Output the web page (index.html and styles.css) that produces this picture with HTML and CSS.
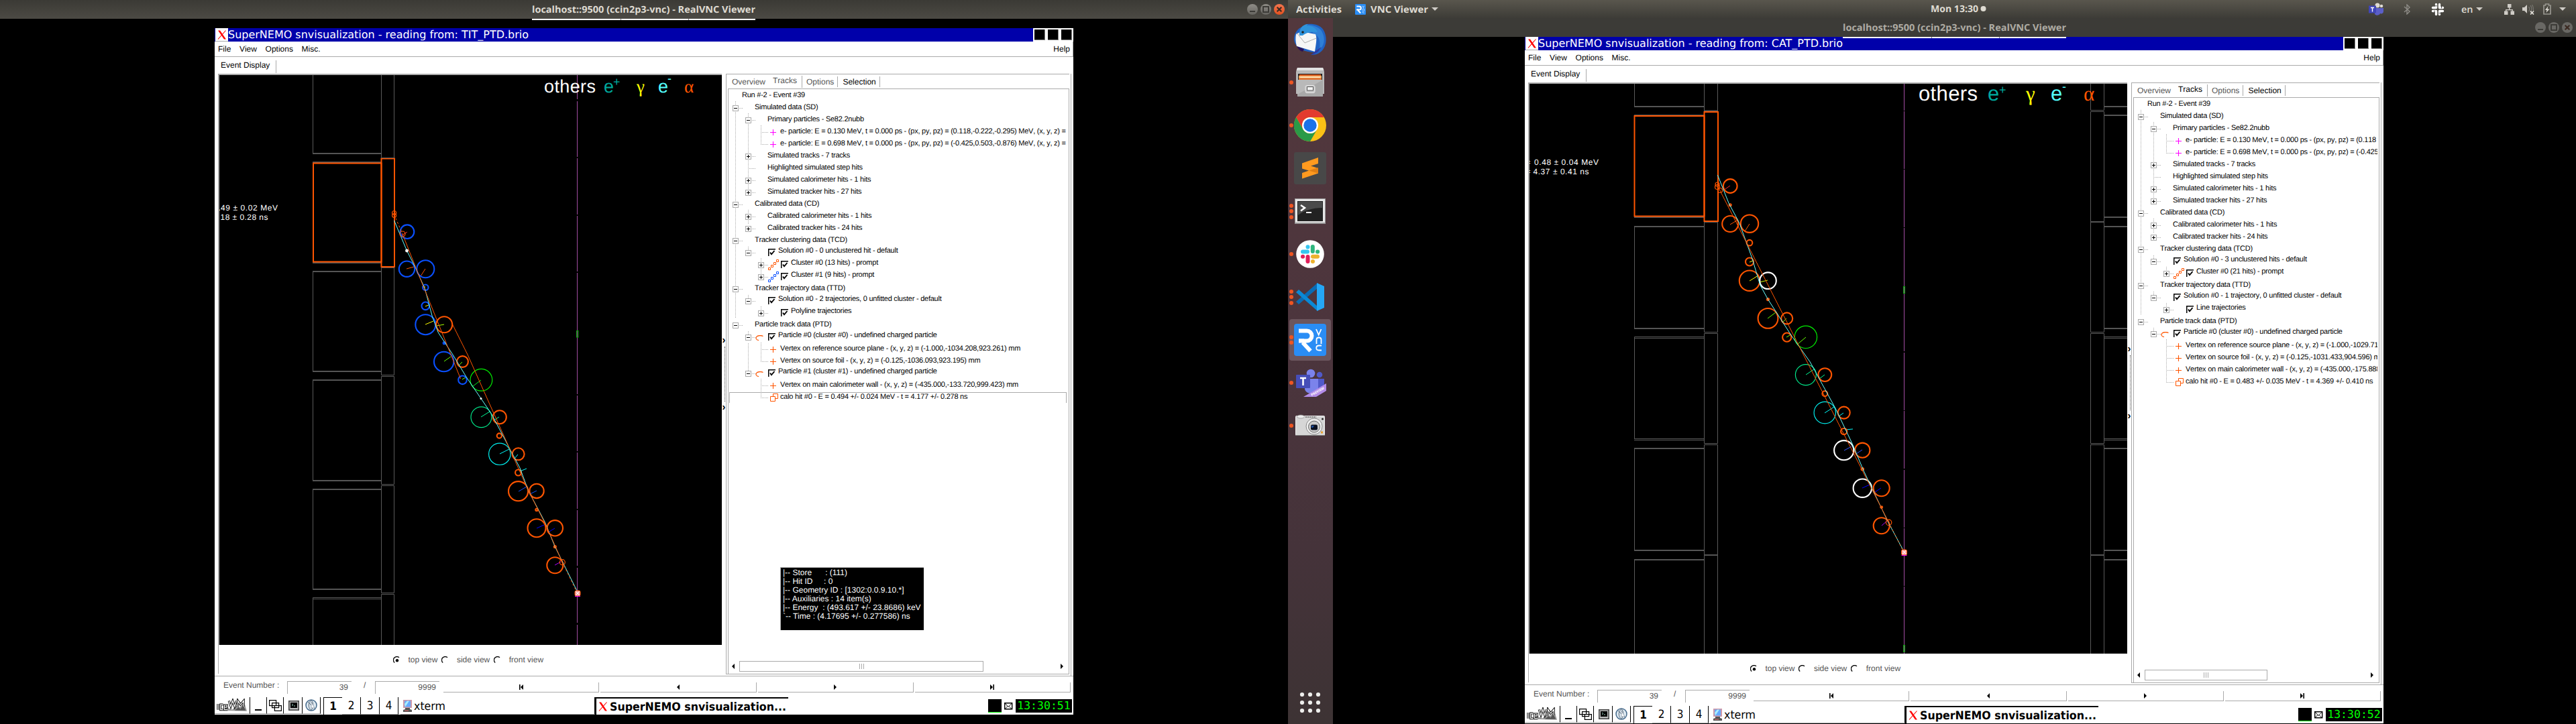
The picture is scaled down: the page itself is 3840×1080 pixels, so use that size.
FILE: index.html
```html
<!DOCTYPE html>
<html lang="en">
<head>
<meta charset="utf-8">
<title>SuperNEMO snvisualization</title>
<link rel="stylesheet" href="styles.css">
</head>
<body>
<svg class="defs" width="0" height="0">
  <defs>
    <symbol id="i-check" viewBox="0 0 11 11"><path d="M0 .75H11M.75 0V11" stroke="#000" stroke-width="1.5"/><path d="M3 5.5l2 2.8L9.5 3" fill="none" stroke="#000" stroke-width="1.9"/></symbol>
    <symbol id="i-plus" viewBox="0 0 9 9"><path d="M0 4.5H9M4.5 0V9" stroke="currentColor" stroke-width="1.1"/></symbol>
    <symbol id="i-cluster" viewBox="0 0 16 16"><path d="M.5 12.5h3v3h-3zM4.5 8.5h3v3h-3zM8.5 4.5h3v3h-3zM12.5.5h3v3h-3z" fill="none" stroke="currentColor"/></symbol>
    <symbol id="i-arc" viewBox="0 0 12 9"><path d="M11.5 1.5C9 .2 4 0 2 2.2.3 4 .6 7 5 7.7" fill="none" stroke="currentColor" stroke-width="1.2"/></symbol>
    <symbol id="i-calo" viewBox="0 0 12 12"><path d="M4.5 4V.5h7v7H8M.5 4.5h7v7h-7z" fill="none" stroke="currentColor"/></symbol>
    <symbol id="i-x" viewBox="0 0 14 14"><path d="M1 .5h3l9 13h-3z" fill="#f00"/><path d="M12.5.5L1 13.5" stroke="#f00" stroke-width="1.1"/></symbol>
    <symbol id="i-play" viewBox="0 0 4 8"><path d="M0 0l4 4-4 4z"/></symbol>
    <symbol id="i-back" viewBox="0 0 4 8"><path d="M4 0L0 4l4 4z"/></symbol>
    <symbol id="i-first" viewBox="0 0 6 8"><path d="M0 0h1.6v8H0zM6 0v8L2 4z"/></symbol>
    <symbol id="i-last" viewBox="0 0 6 8"><path d="M4.4 0H6v8H4.4zM0 0v8l4-4z"/></symbol>
    <symbol id="i-radio" viewBox="0 0 11 11"><path d="M2.2 9.6A4.8 4.8 0 0 1 9 1.8" fill="none" stroke="#000" stroke-width="1.3"/></symbol>
    <symbol id="i-radio-on" viewBox="0 0 11 11"><path d="M2.2 9.6A4.8 4.8 0 0 1 9 1.8" fill="none" stroke="#000" stroke-width="1.3"/><circle cx="6" cy="6.2" r="2.2"/></symbol>
    <symbol id="i-icewm" viewBox="0 0 48 20"><path d="M3 18l14-4 7 3 6-6 6 2 7-7 4 13z" fill="#999"/><path d="M28 18l6-5 3 3 4-6 4 8z" fill="#555"/><path d="M2 8v9M10 9H6v8h4M12 13h4v-3h-4v7h5M19 3l3 9 3-9 3 9 3-9M33 13V3l4 6 5-6v9" fill="none" stroke="#000" stroke-width="3.2"/><path d="M2 8v9M10 9H6v8h4M12 13h4v-3h-4v7h5M19 3l3 9 3-9 3 9 3-9M33 13V3l4 6 5-6v9" fill="none" stroke="#fff" stroke-width="1.3"/></symbol>
    <symbol id="i-windows" viewBox="0 0 19 17"><g fill="#fff" stroke="#000" stroke-width="1.2"><path d="M.6.6h10v8H.6zM4.6 4.6h10v7h-10zM8.400 8.600h10v7.700h-10z"/></g></symbol>
    <symbol id="i-term" viewBox="0 0 16 15"><path fill="#444" d="M0 0h16v15H0z"/><path fill="#bbb" d="M1.500 1.500h13v12h-13z"/><path d="M3 3h10v8H3z"/><path d="M5 5l2 1.500L5 8m3 0h2" stroke="#9cb" fill="none"/></symbol>
    <symbol id="i-globe" viewBox="0 0 18 18"><circle cx="9" cy="9" r="8" fill="#dde8f0" stroke="#456a8c" stroke-width="1.5"/><path d="M9 1.500c-5 3-5 12 0 15 3-4 4-11 0-15M4 4l10 10" fill="none" stroke="#567"/><path d="M9 4v9h5z" fill="#fff" stroke="#789" stroke-width=".7"/></symbol>
    <symbol id="i-pc" viewBox="0 0 15 18"><path fill="#c9a" d="M1 0h13v12H1z"/><path fill="#6af" d="M3 1.500h9v9H3z"/><path fill="#aef" d="M3 6l4-4.500h3L4 10.500z"/><path fill="#555" d="M4 12h7v2l3 1v3H1v-3l3-1z"/><path fill="#c66" d="M3 15.500h6v1.200H3z"/></symbol>
    <symbol id="i-mail" viewBox="0 0 13 11"><path d="M.7.7h11v9H.7z" fill="#fff" stroke="#000" stroke-width="1.4"/><path d="M1 1l5 5.500L11.500 1M1 9.500l4-4M11 9.500l-4-4" fill="none" stroke="#000"/></symbol>
    <symbol id="i-vnc" viewBox="0 0 48 48"><rect width="48" height="48" rx="4" fill="#2a8df5"/><path d="M7 10.500h12a7.500 7.500 0 0 1 0 15H7M13 28l11.500 12.500" fill="none" stroke="#fff" stroke-width="6"/><path d="M7 22.500h8v5.500H7z" fill="#fff"/><path d="M33 8l3.700 8.500L40.500 8M33.500 30v-6.500c0-4 7-4 7 0V30M41 39.500h-4c-5 0-5-7 0-7h4" fill="none" stroke="#fff" stroke-width="1.800"/></symbol>
    <symbol id="i-close" viewBox="0 0 16 16"><path d="M4.700 4.700l6.600 6.600M11.300 4.700l-6.600 6.600" stroke="#3c2a22" stroke-width="2.200"/></symbol>
  </defs>
</svg>

<main class="desktop">
<!-- first monitor -->
<section class="screen">
  <header class="wm-bar active">
    <svg class="wm-title" width="333" height="28"><text x="0" y="19" textLength="333" lengthAdjust="spacingAndGlyphs">localhost::9500 (ccin2p3-vnc) - RealVNC Viewer</text></svg>
    <div class="wm-buttons"><i class="min"></i><i class="max"></i><i class="close"><svg width="16" height="16"><use href="#i-close"/></svg></i></div>
    <div class="vnc-tab"><i></i><i></i></div>
  </header>

  <article class="app app-left">
    <header class="app-title">
      <span class="app-icon"><svg width="14" height="14"><use href="#i-x"/></svg></span>
      <svg class="app-name" width="448" height="20"><text x="0" y="15" textLength="448" lengthAdjust="spacingAndGlyphs">SuperNEMO snvisualization - reading from: TIT_PTD.brio</text></svg>
      <span class="app-btns"><i></i><i></i><i></i></span>
    </header>
    <nav class="menu"><span>File</span><span>View</span><span>Options</span><span>Misc.</span><span class="help">Help</span></nav>
    <div class="display-tab"><span>Event Display</span></div>
    <div class="work">
      <div class="view">
        <svg class="canvas" width="749" height="850" viewBox="327 112 749 850">
          <g class="wall">
            <path d="M466.500 112V229M568.500 112V235.500H587.500V112"/><path class="w2" d="M466 229H568"/>
            <path class="w2" d="M466 242H568M466 392H568"/>
            <path d="M466.500 405V554.500H568.500M568.500 399V559.500H587.500V399"/><path class="w2" d="M466 405H568M466 554H568"/>
            <path d="M466.500 567V717M568.500 561.500V722.500H587.500V561.500z"/><path class="w2" d="M466 567H568M466 717H568"/>
            <path d="M466.500 730V879M568.500 724.500V884.500H587.500V724.500z"/><path class="w2" d="M466 730H568M466 879H568"/>
            <path d="M466.500 962V891.500H568M466.500 893.500H568M568.500 962V886.500H587.500V962"/>
          </g>
          <path class="foil" d="M860.500 112V148M860.500 151V234M860.500 236V320M860.500 322V405M860.500 407V588M860.500 590V673M860.500 675V759M860.500 761V844M860.500 847V929M860.500 932V962"/>
          <rect class="tag" x="859.500" y="493.500" width="2.500" height="9.500"/>
          <g class="hitbox"><rect x="467" y="243.500" width="101.500" height="147"/><rect x="568.500" y="236.500" width="19.500" height="161.500"/></g>
          <path class="gline" d="M568 235.500H588M568 399.500H588"/>
          <g class="rays">
            <path stroke="#f33" d="M607 346l-8 5"/><path stroke="#f50" d="M606 401l11-3M634 401l-7 11"/>
            <path stroke="#ff0" d="M634 484l12-5M634 457l5-2M634 428l-3 0"/><path stroke="#af0" d="M662 484l-11 2"/><path stroke="#6f0" d="M662 539l10-7M689 540l-6 6M689 566l5-3"/>
            <path stroke="#0e2" d="M717 567l-12 9"/><path stroke="#0f9" d="M717 622l13-8M744 622l-8 5"/><path stroke="#0ff" d="M745 677l14-7M772 678l-5 6M775 703l10-4"/>
            <path stroke="#15f" d="M773 733l12-7M800 732l-10 5"/><path stroke="#00f" d="M800 788l11-5M827 788l-10 6"/><path stroke="#a0f" d="M827 843l9-5"/>
          </g>
          <g class="blue"><circle cx="607" cy="345.700" r="10.300"/><circle cx="606.500" cy="401.200" r="11.700"/><circle cx="634.300" cy="401.200" r="13"/><circle cx="634.300" cy="428.700" r="4.200"/><circle cx="634.300" cy="456.300" r="5.800"/><circle cx="634.300" cy="484.200" r="15"/><circle cx="662.200" cy="511.700" r="1.500"/><circle cx="661.700" cy="539.500" r="14.700"/><circle cx="689.500" cy="566.800" r="6.300"/></g>
          <g class="orange"><circle cx="662.200" cy="484.200" r="12"/><circle cx="689.500" cy="539.500" r="8.400"/><circle cx="744.800" cy="622.200" r="10"/><circle cx="744.300" cy="650" r="3.600"/><circle cx="772.600" cy="677.300" r="9"/><circle cx="772.600" cy="705" r="4.500"/><circle cx="772.600" cy="732.700" r="14.600"/><circle cx="800" cy="732.400" r="10.700"/><circle cx="800" cy="760.400" r="1.700"/><circle cx="800" cy="787.800" r="13.500"/><circle cx="827.300" cy="787.800" r="11.700"/><circle cx="827.300" cy="815.500" r="1.500"/><circle cx="827.300" cy="843.200" r="12"/></g>
          <circle class="thin" stroke="#0e0" cx="717.400" cy="566.800" r="16.400"/><circle class="thin" stroke="#00e88a" cx="717.400" cy="622.200" r="15.400"/><circle class="thin" stroke="#0ee" cx="744.800" cy="677.300" r="16.200"/>
          <path class="cyan" d="M587.600 329L606.500 374 619.400 399.500 633.300 430.400 644.300 471.800 653.200 495.900 675.600 530 695.500 563 717 594.500 732.800 617.700 760.200 670 775 698 787.500 731.700 812.400 779 827.300 815.500 860.700 882.500"/>
          <path class="traj" d="M600 349L620.500 401 654 484 686.600 565M674.600 484L697.500 530 720.900 582.600 744.300 635 760.200 670.300 787.500 731.700 813.400 782.500 838.300 838.700"/>
          <path class="traj dash" d="M587.600 320L600 349M838.300 838.700L860.700 885"/>
          <circle class="thin" stroke="#f50" cx="600" cy="349" r="4"/><circle class="thin" stroke="#f50" cx="838.300" cy="838.700" r="4"/>
          <circle class="thin" stroke="#f50" cx="587.600" cy="317.500" r="3"/><circle class="thin" stroke="#f50" cx="587.600" cy="321.500" r="3"/>
          <circle cx="606.500" cy="374" r="2.400" fill="#fff"/><circle cx="717" cy="594.500" r="1.500" fill="#fff"/>
          <rect x="857" y="881" width="8" height="8" rx="2" fill="#faa" stroke="#f50"/><path d="M858 882l6 6M864 882l-6 6" stroke="#fff"/><path d="M857 889.500h8" stroke="#f0f"/>
          <g class="legend"><text x="811" y="137.500" textLength="77">others</text><text x="900" y="137.500" fill="#00a99d">e</text><text x="914" y="128" class="sup" fill="#00a99d">+</text><text x="949" y="137.500" fill="#ff0" class="greek">γ</text><text x="981" y="137.500" fill="#5ff">e</text><text x="995" y="123" class="sup" fill="#5ff">-</text><text x="1020" y="137.500" fill="#f50" class="greek">α</text></g>
          <g class="note"><text x="325.500" y="314">.</text><text x="329" y="314" textLength="85">49 ± 0.02 MeV</text><text x="328.500" y="328" textLength="71">18 ± 0.28 ns</text></g>
        </svg>
        <div class="modes"><label><svg width="11" height="11"><use href="#i-radio-on"/></svg><span>top view</span></label><label><svg width="11" height="11"><use href="#i-radio"/></svg><span>side view</span></label><label><svg width="11" height="11"><use href="#i-radio"/></svg><span>front view</span></label></div>
      </div>
      <div class="splitter"><b>›</b><i></i><b>›</b></div>
      <div class="panel">
        <div class="notebook">
          <div class="tabs"><span>Overview</span><span class="cur">Tracks</span><span>Options</span><span class="dark">Selection</span></div>
          <div class="frame">
            <div class="tree">
              <svg class="guides" width="120" height="480"><path d="M10.500 18V342M29.500 36V153M29.500 180V202M29.500 235V240M29.500 307V312M29.500 361V366M29.500 379V420M48.500 54V82M48.500 252V276M48.500 324V330M48.500 378V407M48.500 432V461"/><path d="M48 64.500H59M48 82.500H59M29 118.500H41M48 388.500H59M48 406.500H59M48 442.500H59M48 460.500H59"/></svg>
              <div class="node root">Run #-2 - Event #39</div>
              <div class="node d0"><i class="tg open"></i>Simulated data (SD)</div>
              <div class="node d1"><i class="tg open"></i>Primary particles - Se82.2nubb</div>
              <div class="node leaf"><svg class="mag" width="9" height="9"><use href="#i-plus"/></svg>e- particle: E = 0.130 MeV, t = 0.000 ps - (px, py, pz) = (0.118,-0.222,-0.295) MeV, (x, y, z) =</div>
              <div class="node leaf"><svg class="mag" width="9" height="9"><use href="#i-plus"/></svg>e- particle: E = 0.698 MeV, t = 0.000 ps - (px, py, pz) = (-0.425,0.503,-0.876) MeV, (x, y, z) =</div>
              <div class="node d1"><i class="tg"></i>Simulated tracks - 7 tracks</div>
              <div class="node d1"><i class="tg none"></i>Highlighted simulated step hits</div>
              <div class="node d1"><i class="tg"></i>Simulated calorimeter hits - 1 hits</div>
              <div class="node d1"><i class="tg"></i>Simulated tracker hits - 27 hits</div>
              <div class="node d0"><i class="tg open"></i>Calibrated data (CD)</div>
              <div class="node d1"><i class="tg"></i>Calibrated calorimeter hits - 1 hits</div>
              <div class="node d1"><i class="tg"></i>Calibrated tracker hits - 24 hits</div>
              <div class="node d0"><i class="tg open"></i>Tracker clustering data (TCD)</div>
              <div class="node d1 ck"><i class="tg open"></i><svg class="box" width="11" height="11"><use href="#i-check"/></svg><span>Solution #0 - 0 unclustered hit - default</span></div>
              <div class="node d2 ck"><i class="tg ic"></i><svg class="clu" width="16" height="16"><use href="#i-cluster"/></svg><svg class="box" width="11" height="11"><use href="#i-check"/></svg><span>Cluster #0 (13 hits) - prompt</span></div>
              <div class="node d2 ck"><i class="tg ic"></i><svg class="clu b" width="16" height="16"><use href="#i-cluster"/></svg><svg class="box" width="11" height="11"><use href="#i-check"/></svg><span>Cluster #1 (9 hits) - prompt</span></div>
              <div class="node d0"><i class="tg open"></i>Tracker trajectory data (TTD)</div>
              <div class="node d1 ck"><i class="tg open"></i><svg class="box" width="11" height="11"><use href="#i-check"/></svg><span>Solution #0 - 2 trajectories, 0 unfitted cluster - default</span></div>
              <div class="node d2 ck"><i class="tg"></i><svg class="box" width="11" height="11"><use href="#i-check"/></svg><span>Polyline trajectories</span></div>
              <div class="node d0"><i class="tg open"></i>Particle track data (PTD)</div>
              <div class="node d1 ck"><i class="tg open ic"></i><svg class="arc" width="12" height="9"><use href="#i-arc"/></svg><svg class="box" width="11" height="11"><use href="#i-check"/></svg><span>Particle #0 (cluster #0) - undefined charged particle</span></div>
              <div class="node leaf"><svg width="9" height="9"><use href="#i-plus"/></svg>Vertex on reference source plane - (x, y, z) = (-1.000,-1034.208,923.261) mm</div>
              <div class="node leaf"><svg width="9" height="9"><use href="#i-plus"/></svg>Vertex on source foil - (x, y, z) = (-0.125,-1036.093,923.195) mm</div>
              <div class="node d1 ck"><i class="tg open ic"></i><svg class="arc" width="12" height="9"><use href="#i-arc"/></svg><svg class="box" width="11" height="11"><use href="#i-check"/></svg><span>Particle #1 (cluster #1) - undefined charged particle</span></div>
              <div class="node leaf"><svg width="9" height="9"><use href="#i-plus"/></svg>Vertex on main calorimeter wall - (x, y, z) = (-435.000,-133.720,999.423) mm</div>
              <div class="node leaf sel"><svg class="calo" width="12" height="12"><use href="#i-calo"/></svg>calo hit #0 - E = 0.494 +/- 0.024 MeV - t = 4.177 +/- 0.278 ns</div>
            </div>
            <pre class="tooltip">|-- Store      : (111)
|-- Hit ID     : 0
|-- Geometry ID : [1302:0.0.9.10.*]
|-- Auxiliaries : 14 item(s)
|-- Energy  : (493.617 +/- 23.8686) keV
`-- Time : (4.17695 +/- 0.277586) ns</pre>
            <div class="hscroll"><svg width="4" height="8"><use href="#i-back"/></svg><div class="thumb"><i></i></div><svg class="end" width="4" height="8"><use href="#i-play"/></svg></div>
          </div>
        </div>
      </div>
    </div>
    <div class="event-row"><label>Event Number :</label><span class="num">39</span><span class="slash">/</span><span class="num">9999</span>
      <div class="steps"><b><svg width="6" height="8"><use href="#i-first"/></svg></b><b><svg width="4" height="8"><use href="#i-back"/></svg></b><b><svg width="4" height="8"><use href="#i-play"/></svg></b><b><svg width="6" height="8"><use href="#i-last"/></svg></b></div>
    </div>
    <footer class="taskbar">
      <b class="t-logo"><svg width="46" height="20"><use href="#i-icewm"/></svg></b><b class="t-min"><i></i></b><b class="t-win"><svg width="19" height="17"><use href="#i-windows"/></svg></b><b class="t-term"><svg width="16" height="15"><use href="#i-term"/></svg></b><b class="t-globe"><svg width="18" height="18"><use href="#i-globe"/></svg></b>
      <span class="ws on">1</span><span class="ws">2</span><span class="ws">3</span><span class="ws">4</span>
      <span class="task"><svg width="15" height="18"><use href="#i-pc"/></svg><svg width="50" height="22"><text class="cond" x="2" y="17" textLength="47" lengthAdjust="spacingAndGlyphs">xterm</text></svg></span>
      <span class="task current"><svg width="14" height="14"><use href="#i-x"/></svg><svg width="270" height="22"><text class="cond bold" x="3" y="17" textLength="263" lengthAdjust="spacingAndGlyphs">SuperNEMO snvisualization...</text></svg></span>
      <span class="tray"><i class="cpu"></i><svg width="13" height="11"><use href="#i-mail"/></svg><time>13:30:51</time></span>
    </footer>
  </article>
</section>

<!-- second monitor -->
<section class="screen second">
  <header class="panel-top">
    <svg class="act" width="69" height="27"><text x="0" y="19" textLength="68" lengthAdjust="spacingAndGlyphs">Activities</text></svg>
    <svg class="p-vnc" width="16" height="16"><use href="#i-vnc"/></svg>
    <svg width="87" height="27"><text x="0" y="19" textLength="86" lengthAdjust="spacingAndGlyphs">VNC Viewer</text></svg>
    <i class="caret c1"></i>
    <svg class="clock" width="84" height="27"><text x="0" y="18" textLength="71" lengthAdjust="spacingAndGlyphs">Mon 13:30</text><circle cx="78.500" cy="13" r="4"/></svg>
    <div class="status">
      <svg width="22" height="20" viewBox="0 0 22 20"><circle cx="13" cy="4" r="3.500" fill="#5b5fc7"/><circle cx="19" cy="5" r="2.300" fill="#4046a8"/><path fill="#5b5fc7" d="M8 8h14v5c0 3-3 4-5 3-1 3-6 4-8 1z"/><path fill="#4046b8" d="M0 4.500h11v11H0z"/><path d="M3 7.500h5M5.500 7.500v6" stroke="#fff" stroke-width="1.400"/></svg>
      <svg class="bt" width="10" height="16" viewBox="0 0 10 16"><path d="M1 4l8 7-4 4V1l4 4-8 7" fill="none" stroke="#8f8d88" stroke-width="1.400"/></svg>
      <svg class="sl" width="20" height="20" viewBox="0 0 20 20"><g fill="none" stroke-linecap="round"><path d="M7.500 2.500v5M2.500 12.500h5M12.500 12.500v5M12.500 7.500h5M12.500 2.500v5M2.500 7.500h5M7.500 12.500v5M12.500 12.500h5" stroke="#fff" stroke-width="3.400"/><path d="M5.500 4.800h3M15.500 5v3M5 12v3M12 15.500h3" stroke="#222" stroke-width=".8"/></g></svg>
      <svg class="en" width="18" height="27"><text x="0" y="19" textLength="17.500" lengthAdjust="spacingAndGlyphs">en</text></svg>
      <i class="caret c2"></i>
      <svg class="net" width="15" height="16" viewBox="0 0 15 16" fill="#cfccc6"><path d="M5 0h5.500v5.500H5zM0 10.500h5.500V16H0zM9.500 10.500H15V16H9.500zM7 5h1.400v3h4.500v3h-1.400V9.300H3.400V11H2V8h5z"/></svg>
      <svg class="vol" width="18" height="16" viewBox="0 0 18 16"><path d="M0 5h3l4-4v13l-4-4H0z" fill="#cfccc6"/><path d="M9.500 4c1.500 2 1.500 5 0 7M12 2c2.500 3 2.500 8 0 11M14.500 1c2 3 2 6 2 9" fill="none" stroke="#77756f" stroke-width="1.300"/><path d="M12 10.500l5 5M17 10.500l-5 5" stroke="#e6e3dc" stroke-width="1.700"/></svg>
      <svg class="bat" width="12" height="17" viewBox="0 0 12 17"><path d="M1 3h2.500V1h5v2H11v13H1z" fill="none" stroke="#98968f" stroke-width="1.700"/><path d="M7.500 4L3 10h2.500L4.500 14 9.500 8.500H6.500z" fill="#dcd9d2"/></svg>
      <i class="caret c3"></i>
    </div>
  </header>
  <div class="below">
    <aside class="dock">
      <div class="launch"><svg width="48" height="48" viewBox="0 0 48 48"><path d="M19 1c8-1 20 0 25 9 6 10 5 26-5 33-4 3-9 4-14 4l7-4C14 43 1 36 0 24 0 16 4 9 10 6z" fill="#1f62c4"/><path d="M20 2c9 0 19 4 22 11 5 10 3 20-4 27 1-11 2-20-10-26z" fill="#2f7fd6"/><path d="M3 16l8-4 21 4c3 6 0 18-1 26L4 34C2 27 2 21 3 16z" fill="#f6f6f6"/><path d="M4 14l12 15 17-7" fill="none" stroke="#999" stroke-width=".8"/><path d="M8 18C7 9 12 1 21 1l-2 2c9 1 14 4 16 10-8-1-17 0-22 5z" fill="#2f93dc"/><circle cx="13" cy="13" r="1.800" fill="#222"/><path d="M4 34l11 4-2 4c-4-1-7-4-9-8z" fill="#2a1259"/><path d="M32 41l9-6c-3 6-9 11-16 12z" fill="#2d3aa0"/></svg></div>
      <div class="launch r1"><i></i><svg width="48" height="48" viewBox="0 0 48 48"><path d="M5 2h38l2 6v33H3V8z" fill="#b9b9b9"/><path d="M5 2h38l1.500 4H3.500z" fill="#e2e2e2"/><path fill="#222" d="M6 11h36v12H6z"/><path fill="#d4541c" d="M8 12h32v8H8z"/><path fill="#f3ab5e" d="M7 14h34v6H7z"/><path fill="#fff0dc" d="M9 15.500h30v1.200H9z"/><path fill="#d4541c" d="M7 18h34v1.500H7z"/><path fill="#a8a8a8" d="M5 20h38v25H5z"/><path fill="#c4c4c4" d="M5 20h38L5 42z" opacity=".6"/><rect x="17" y="28.500" width="14" height="11" rx="2" fill="#c9c9c9" stroke="#e2e2e2"/><path fill="#f2f2f2" stroke="#555" d="M19.500 30.500h9v5.500h-9z"/></svg></div>
      <div class="launch r1"><i></i><svg width="48" height="48" viewBox="0 0 48 48"><circle cx="24" cy="24" r="24" fill="#fbc116"/><path d="M3.200 12A24 24 0 0 1 44.800 12H24A12 12 0 0 0 13.600 30z" fill="#e33b2e"/><path d="M3.200 12A24 24 0 0 0 24 48L34.400 30A12 12 0 0 1 13.600 30z" fill="#2a9a47"/><circle cx="24" cy="24" r="12" fill="#fff"/><circle cx="24" cy="24" r="9.700" fill="#1b72e8"/></svg></div>
      <div class="launch"><svg width="48" height="48" viewBox="0 0 48 48"><rect width="48" height="48" rx="3" fill="#484848"/><path d="M12 16.500l24-8.500v9l-11 3.500 11 3.500v7.500L12 39.500v-8.500l10-3.500-10-3z" fill="#ff9a1f"/><path d="M22 27.500l14-4.500v8.500z" fill="#e07f14"/></svg></div>
      <div class="launch r3"><i></i><svg width="48" height="48" viewBox="0 0 48 48"><path fill="#9b9b9b" d="M1 5h46v38H1z"/><path fill="#e6e6e6" d="M2 6h44v35H2z"/><path fill="#222" d="M5 9h38v30H5z"/><path fill="#4a4a4a" d="M6 10h36v9C27 19 15 23 6 30z"/><path d="M10 15l6 4-6 4.500" fill="none" stroke="#fff" stroke-width="2.500"/><path d="M18 26h8" stroke="#fff" stroke-width="2"/></svg></div>
      <div class="launch r1"><i></i><svg width="48" height="48" viewBox="0 0 48 48"><circle cx="24" cy="24" r="20.800" fill="#fff"/><g fill="none" stroke-width="6" stroke-linecap="round"><path d="M13 20.500h7M20.500 13.200v.2" stroke="#36c5f0"/><path d="M27.800 13v7M35 20.500h.2" stroke="#2eb67d"/><path d="M28 27.800h7M28 35h-.1" stroke="#ecb22e"/><path d="M20.500 28v7M13 27.800h.1" stroke="#e01e5a"/></g></svg></div>
      <div class="launch r3"><i></i><svg width="48" height="48" viewBox="0 0 48 48"><path d="M3 31l4 4 28-24V3z" fill="#0a6cb4"/><path d="M3 17l4-4 28 25v7z" fill="#0a89d6"/><path d="M34 3l11 5v32l-11 5z" fill="#25a7f5"/></svg></div>
      <div class="launch r2 focus"><i></i><svg width="48" height="48"><use href="#i-vnc"/></svg></div>
      <div class="launch r1"><i></i><svg width="48" height="48" viewBox="0 0 48 48"><circle cx="25" cy="10" r="6.300" fill="#7b83eb"/><circle cx="38" cy="12" r="4.300" fill="#5059c9"/><path d="M34 18h11v14c0 4-6 6-11 3z" fill="#5059c9"/><path d="M16 18h20v16c0 7-19 9-20-1z" fill="#7b83eb"/><rect x="3" y="12" width="21" height="20" rx="1" fill="#464eb8"/><path d="M9 17h9M13.500 17v11" stroke="#fff" stroke-width="2.600"/><path d="M14 45L48 25v11L33 45z" fill="#b38ce8"/><text x="26.500" y="44" transform="rotate(-30 26.500 44)" class="pv" textLength="22">PREVIEW</text></svg></div>
      <div class="launch r1"><i></i><svg width="48" height="48" viewBox="0 0 48 48"><rect x="2.500" y="9.500" width="43" height="29" rx="1" fill="#d6d6d6" stroke="#f2f2f2"/><path d="M3 38.500h42" stroke="#777"/><ellipse cx="10" cy="10.500" rx="5.500" ry="2.500" fill="#eee" stroke="#888" stroke-width=".7"/><path d="M17 11h16" stroke="#555" stroke-width="1.500" stroke-dasharray="2 1"/><circle cx="30" cy="25" r="12" fill="#eee" stroke="#888"/><circle cx="30" cy="25.500" r="8.500" fill="#ccc" stroke="#666"/><rect x="25" y="22.500" width="10" height="8" rx="2" fill="#0a1020"/><path fill="#1d4fa0" d="M26 24h4l-2 3h-2z"/><circle cx="42.500" cy="14" r="1.500" fill="#222"/><path fill="#e9a030" d="M40 32.500h3v3h-3z"/></svg></div>
      <svg class="apps" width="36" height="36" viewBox="0 0 36 36"><g fill="#eeeeec"><circle cx="6" cy="6" r="3.100"/><circle cx="18" cy="6" r="3.100"/><circle cx="30" cy="6" r="3.100"/><circle cx="6" cy="18" r="3.100"/><circle cx="18" cy="18" r="3.100"/><circle cx="30" cy="18" r="3.100"/><circle cx="6" cy="30" r="3.100"/><circle cx="18" cy="30" r="3.100"/><circle cx="30" cy="30" r="3.100"/></g></svg>
    </aside>
    <div class="remote">
      <header class="wm-bar idle">
        <svg class="wm-title" width="333" height="28"><text x="0" y="19" textLength="333" lengthAdjust="spacingAndGlyphs">localhost::9500 (ccin2p3-vnc) - RealVNC Viewer</text></svg>
        <div class="wm-buttons"><i class="min"></i><i class="max"></i><i class="close"><svg width="16" height="16"><use href="#i-close"/></svg></i></div>
        <div class="vnc-tab"><i></i><i></i></div>
      </header>
      <article class="app app-right">
        <header class="app-title">
          <span class="app-icon"><svg width="14" height="14"><use href="#i-x"/></svg></span>
          <svg class="app-name" width="455" height="20"><text x="0" y="15" textLength="454" lengthAdjust="spacingAndGlyphs">SuperNEMO snvisualization - reading from: CAT_PTD.brio</text></svg>
          <span class="app-btns"><i></i><i></i><i></i></span>
        </header>
        <nav class="menu"><span>File</span><span>View</span><span>Options</span><span>Misc.</span><span class="help">Help</span></nav>
        <div class="display-tab"><span>Event Display</span></div>
        <div class="work">
          <div class="view">
            <svg class="canvas" width="891" height="850" viewBox="2280 125 891 850">
              <g class="wall">
                <path d="M2436.500 125V159M2540.500 125V165H2560.500V125"/>
                <path class="w2" d="M2436 159H2540M2436 172H2540M2436 324H2540M2436 338H2540M2436 490H2540"/>
                <path d="M2436.500 338V490M2540.500 331V495.500H2560.500V331M2436.500 654.500V502.500H2540M2436 504.500H2540M2436 654.500H2540M2436 656.500H2540M2540.500 497.500V661.500H2560.500V497.500z"/>
                <path d="M2436.500 669V821M2540.500 663.500V828H2560.500V663.500zM2436.500 835V975M2540.500 828V975M2560.500 828V975"/>
                <path class="w2" d="M2436 669H2540M2436 821H2540M2436 835H2540M2540 828H2561"/>
                <path d="M3116.500 125V164.500H3136.500V125M3116.500 331V166.500H3136.500V331M3116.500 331V495.500H3136.500V331M3116.500 497.500V661.500H3136.500V497.500zM3116.500 663.500V975M3116 663.500H3136.500V975M3136 502.500H3171M3136 504.500H3171M3136 654.500H3171M3136 656.500H3171"/>
                <path class="w2" d="M3136 159H3171M3136 172H3171M3136 324H3171M3136 338H3171M3136 490H3171M3136 669H3171M3136 821H3171M3136 835H3171M3116 331H3137M3116 828H3137"/>
              </g>
              <path class="foil" d="M2838.500 125V165M2838.500 166V252M2838.500 253V339M2838.500 340V524M2838.500 526V612M2838.500 613V699M2838.500 701V787M2838.500 788V874M2838.500 875V975"/>
              <rect class="tag" x="2837.500" y="427.500" width="2" height="10"/><rect class="tag" x="2837.500" y="962.500" width="2" height="10"/>
              <g class="hitbox"><rect x="2436.500" y="173" width="104" height="149.500"/><rect x="2540.500" y="167" width="20.500" height="163"/></g>
              <path class="gline" d="M2540 165.500H2561M2540 331.500H2561"/>
              <g class="rays">
                <path stroke="#f22" d="M2579 277l-10 7"/><path stroke="#f50" d="M2579 335l10-6M2608 334l-7 11"/>
                <path stroke="#ff0" d="M2608 419l13-8M2608 391l5-2"/><path stroke="#cf0" d="M2635 418l-12 3"/><path stroke="#6f0" d="M2635 475l12-9M2663 475l-6 6M2663 503l5-3M2692 503l-12 10"/>
                <path stroke="#0f9" d="M2692 559l12-8M2720 559l-8 6"/><path stroke="#0ff" d="M2720 616l14-9M2748 616l-7 5M2751 641l11-1"/>
                <path stroke="#35f" d="M2749 672l11-6M2776 671l-9 6"/><path stroke="#00f" d="M2776 728l11-5M2804 728l-9 6"/><path stroke="#a0f" d="M2805 784l8-7"/>
              </g>
              <g class="orange"><circle cx="2579.200" cy="277.500" r="10.400"/><circle cx="2579.200" cy="305.800" r="1.500"/><circle cx="2579.200" cy="334" r="12"/><circle cx="2608" cy="333.700" r="13.200"/><circle cx="2608" cy="362.200" r="4.300"/><circle cx="2608" cy="390.500" r="6"/><circle cx="2608" cy="418.700" r="15.200"/><circle cx="2635.500" cy="446.600" r="1.500"/><circle cx="2635.500" cy="474.900" r="14.900"/><circle cx="2663.700" cy="474.900" r="8.500"/><circle cx="2663.700" cy="503.100" r="6.600"/><circle cx="2720.300" cy="559.100" r="9.900"/><circle cx="2720.300" cy="587.200" r="3.900"/><circle cx="2748.700" cy="615.600" r="9"/><circle cx="2748.700" cy="643.600" r="4.600"/><circle cx="2776.300" cy="671.700" r="11.100"/><circle cx="2776.300" cy="699.800" r="1.700"/><circle cx="2804.700" cy="728.200" r="12"/><circle cx="2804.700" cy="756.600" r="1.400"/><circle cx="2804.700" cy="784.300" r="12"/></g>
              <g class="white"><circle cx="2635.500" cy="418.700" r="12.300"/><circle cx="2748.700" cy="671.700" r="14.600"/><circle cx="2776.300" cy="728.200" r="13.700"/></g>
              <circle class="thin" stroke="#0e0" cx="2691.900" cy="502.800" r="16.700"/><circle class="thin" stroke="#00e88a" cx="2691.900" cy="559.100" r="15.500"/><circle class="thin" stroke="#0ee" cx="2720.300" cy="615.600" r="16.200"/>
              <path class="cyan" d="M2560.400 261L2577 303 2592.700 332.300 2612 385.700 2623.800 425.300 2635.500 446.600 2670.700 501 2698.300 540 2711 563.300 2736 609 2761 661.500 2778 702 2794.700 737 2815.600 780.800 2836.400 819.400"/>
              <path class="traj" d="M2560.400 277.200L2815.600 779.400"/><path class="traj dash" d="M2815.600 779.400L2838 824"/>
              <circle class="thin" stroke="#f50" cx="2560" cy="275" r="3"/><circle class="thin" stroke="#f50" cx="2560" cy="279" r="3.500"/><circle class="thin" stroke="#f50" cx="2564" cy="284" r="3.500"/><circle class="thin" stroke="#f50" cx="2815.600" cy="779.400" r="4.200"/>
              <rect x="2834.500" y="820" width="8" height="8" rx="2" fill="#faa" stroke="#f50"/><path d="M2836 821l6 6M2841 821l-5 6" stroke="#fff"/><path d="M2834.500 828.500h8" stroke="#f0f"/>
              <g class="legend big"><text x="2860" y="150" textLength="88">others</text><text x="2963" y="150" fill="#00a99d">e</text><text x="2980" y="140" class="sup" fill="#00a99d">+</text><text x="3020" y="150" fill="#ff0" class="greek">γ</text><text x="3057" y="150" fill="#5ff">e</text><text x="3074" y="135" class="sup" fill="#5ff">-</text><text x="3106" y="150" fill="#f50" class="greek">α</text></g>
              <g class="note"><text x="2274.500" y="246">=</text><text x="2274.500" y="260">=</text><text x="2287" y="246" textLength="96">0.48 ± 0.04 MeV</text><text x="2285.500" y="260" textLength="83">4.37 ± 0.41 ns</text></g>
            </svg>
            <div class="modes"><label><svg width="11" height="11"><use href="#i-radio-on"/></svg><span>top view</span></label><label><svg width="11" height="11"><use href="#i-radio"/></svg><span>side view</span></label><label><svg width="11" height="11"><use href="#i-radio"/></svg><span>front view</span></label></div>
          </div>
          <div class="splitter"><b>›</b><i></i><b>›</b></div>
          <div class="panel">
            <div class="notebook">
              <div class="tabs"><span>Overview</span><span class="cur dark">Tracks</span><span>Options</span><span class="dark">Selection</span></div>
              <div class="frame">
                <div class="tree">
                  <svg class="guides" width="120" height="480"><path d="M10.500 18V324M29.500 36V153M29.500 180V202M29.500 235V240M29.500 289V294M29.500 343V348M48.500 54V82M48.500 252V258M48.500 306V312M48.500 360V425"/><path d="M48 64.500H59M48 82.500H59M29 118.500H41M48 370.500H59M48 388.500H59M48 406.500H59M48 424.500H59"/></svg>
                  <div class="node root">Run #-2 - Event #39</div>
                  <div class="node d0"><i class="tg open"></i>Simulated data (SD)</div>
                  <div class="node d1"><i class="tg open"></i>Primary particles - Se82.2nubb</div>
                  <div class="node leaf"><svg class="mag" width="9" height="9"><use href="#i-plus"/></svg>e- particle: E = 0.130 MeV, t = 0.000 ps - (px, py, pz) = (0.118</div>
                  <div class="node leaf"><svg class="mag" width="9" height="9"><use href="#i-plus"/></svg>e- particle: E = 0.698 MeV, t = 0.000 ps - (px, py, pz) = (-0.425</div>
                  <div class="node d1"><i class="tg"></i>Simulated tracks - 7 tracks</div>
                  <div class="node d1"><i class="tg none"></i>Highlighted simulated step hits</div>
                  <div class="node d1"><i class="tg"></i>Simulated calorimeter hits - 1 hits</div>
                  <div class="node d1"><i class="tg"></i>Simulated tracker hits - 27 hits</div>
                  <div class="node d0"><i class="tg open"></i>Calibrated data (CD)</div>
                  <div class="node d1"><i class="tg"></i>Calibrated calorimeter hits - 1 hits</div>
                  <div class="node d1"><i class="tg"></i>Calibrated tracker hits - 24 hits</div>
                  <div class="node d0"><i class="tg open"></i>Tracker clustering data (TCD)</div>
                  <div class="node d1 ck"><i class="tg open"></i><svg class="box" width="11" height="11"><use href="#i-check"/></svg><span>Solution #0 - 3 unclustered hits - default</span></div>
                  <div class="node d2 ck"><i class="tg ic"></i><svg class="clu" width="16" height="16"><use href="#i-cluster"/></svg><svg class="box" width="11" height="11"><use href="#i-check"/></svg><span>Cluster #0 (21 hits) - prompt</span></div>
                  <div class="node d0"><i class="tg open"></i>Tracker trajectory data (TTD)</div>
                  <div class="node d1 ck"><i class="tg open"></i><svg class="box" width="11" height="11"><use href="#i-check"/></svg><span>Solution #0 - 1 trajectory, 0 unfitted cluster - default</span></div>
                  <div class="node d2 ck"><i class="tg"></i><svg class="box" width="11" height="11"><use href="#i-check"/></svg><span>Line trajectories</span></div>
                  <div class="node d0"><i class="tg open"></i>Particle track data (PTD)</div>
                  <div class="node d1 ck"><i class="tg open ic"></i><svg class="arc" width="12" height="9"><use href="#i-arc"/></svg><svg class="box" width="11" height="11"><use href="#i-check"/></svg><span>Particle #0 (cluster #0) - undefined charged particle</span></div>
                  <div class="node leaf"><svg width="9" height="9"><use href="#i-plus"/></svg>Vertex on reference source plane - (x, y, z) = (-1.000,-1029.71</div>
                  <div class="node leaf"><svg width="9" height="9"><use href="#i-plus"/></svg>Vertex on source foil - (x, y, z) = (-0.125,-1031.433,904.596) m</div>
                  <div class="node leaf"><svg width="9" height="9"><use href="#i-plus"/></svg>Vertex on main calorimeter wall - (x, y, z) = (-435.000,-175.888</div>
                  <div class="node leaf"><svg class="calo" width="12" height="12"><use href="#i-calo"/></svg>calo hit #0 - E = 0.483 +/- 0.035 MeV - t = 4.369 +/- 0.410 ns</div>
                </div>
                <div class="hscroll"><svg width="4" height="8"><use href="#i-back"/></svg><div class="thumb"><i></i></div><svg class="end" width="4" height="8"><use href="#i-play"/></svg></div>
              </div>
            </div>
          </div>
        </div>
        <div class="event-row"><label>Event Number :</label><span class="num">39</span><span class="slash">/</span><span class="num">9999</span>
          <div class="steps"><b><svg width="6" height="8"><use href="#i-first"/></svg></b><b><svg width="4" height="8"><use href="#i-back"/></svg></b><b><svg width="4" height="8"><use href="#i-play"/></svg></b><b><svg width="6" height="8"><use href="#i-last"/></svg></b></div>
        </div>
        <footer class="taskbar">
          <b class="t-logo"><svg width="46" height="20"><use href="#i-icewm"/></svg></b><b class="t-min"><i></i></b><b class="t-win"><svg width="19" height="17"><use href="#i-windows"/></svg></b><b class="t-term"><svg width="16" height="15"><use href="#i-term"/></svg></b><b class="t-globe"><svg width="18" height="18"><use href="#i-globe"/></svg></b>
          <span class="ws on">1</span><span class="ws">2</span><span class="ws">3</span><span class="ws">4</span>
          <span class="task"><svg width="15" height="18"><use href="#i-pc"/></svg><svg width="50" height="22"><text class="cond" x="2" y="17" textLength="47" lengthAdjust="spacingAndGlyphs">xterm</text></svg></span>
          <span class="task current"><svg width="14" height="14"><use href="#i-x"/></svg><svg width="270" height="22"><text class="cond bold" x="3" y="17" textLength="263" lengthAdjust="spacingAndGlyphs">SuperNEMO snvisualization...</text></svg></span>
          <span class="tray"><i class="cpu"></i><svg width="13" height="11"><use href="#i-mail"/></svg><time>13:30:52</time></span>
        </footer>
      </article>
    </div>
  </div>
</section>
</main>
</body>
</html>
```
FILE: styles.css
```css
* { box-sizing: border-box; }
html, body { margin: 0; background: #000; }
body {
  width: 3840px; height: 1080px; overflow: hidden;
  font: 12px/1 "Liberation Sans", Arial, sans-serif; color: #000;
  text-rendering: geometricPrecision; font-kerning: none;
}
svg { display: block; flex: none; }
i, b { font-style: normal; font-weight: normal; }
.defs { position: absolute; }
.desktop { display: flex; }
.screen { width: 1920px; height: 1080px; flex: none; }

/* host window manager */
.wm-bar { position: relative; height: 28px; display: flex; align-items: center; justify-content: flex-end; background: linear-gradient(#3b3a35, #4c4a44); }
.wm-bar.idle { background: #3c3b37; height: 28px; }
.wm-title { margin-right: 733px; }
.wm-title text { font: bold 14px "Open Sans", sans-serif; fill: #dfdbd2; }
.idle .wm-title { margin-right: 699px; }
.idle .wm-title text { fill: #aeaba3; }
.wm-buttons { display: flex; gap: 4px; padding-right: 5px; }
.wm-buttons i { width: 16px; height: 16px; border-radius: 50%; background: linear-gradient(#8f8d87, #666560); display: flex; align-items: center; justify-content: center; }
.wm-buttons .min::after { content: ""; width: 8px; height: 2px; background: #3c3b37; margin-top: 5px; }
.wm-buttons .max::after { content: ""; width: 6px; height: 6px; border: 2px solid #3c3b37; }
.wm-buttons .close { background: linear-gradient(#f4764f, #e2501e); }
.idle .wm-buttons i { background: #696864; }
.vnc-tab { position: absolute; top: 28px; left: 793px; width: 333px; height: 2px; background: #fff; display: flex; gap: 100px; padding-left: 132px; z-index: 2; }
.idle .vnc-tab { left: 760px; }
.vnc-tab i { width: 1px; background: #777; }

/* remote application window */
.app { width: 1280px; height: 1024px; background: #fff; display: flex; flex-direction: column; }
.app-left { margin: 14px 0 0 320px; }
.app-right { margin-left: 286px; }
.app-title { height: 20px; background: #0000aa; display: flex; }
.app-icon { width: 19px; height: 20px; margin-left: 1px; background: #fff; border-bottom: 1px solid #aaa; display: flex; align-items: center; justify-content: center; }
.app-name text { font: 16px "DejaVu Sans Condensed", "DejaVu Sans", sans-serif; fill: #fff; }
.app-btns { margin-left: auto; display: flex; }
.app-btns i { width: 20px; height: 20px; background: #000; border: 2px solid #fff; box-shadow: inset -1px -1px 0 #888; }
.menu { height: 23px; border-bottom: 1px solid #aaa; border-right: 1px solid #aaa; display: flex; align-items: center; gap: 12.600px; padding: 0 4px 0 5px; }
.menu .help { margin-left: auto; }
.display-tab { height: 25px; padding: 5px 0 0 9px; }
.display-tab span { display: block; width: 83px; height: 19px; line-height: 14px; border-right: 1px solid #aaa; white-space: nowrap; }
.work { height: 899px; display: flex; padding-left: 5px; padding-right: 3px; position: relative; border-bottom: 1px solid #aaa; }
.view { flex: 1; min-width: 0; }
.canvas { background: #000; border-top: 2px solid #aaa; border-left: 2px solid #aaa; box-sizing: content-box; }
.modes { height: 43px; border-left: 1px solid #aaa; display: flex; justify-content: center; align-items: center; gap: 6px; color: #555; }
.modes label { display: flex; align-items: center; }
.modes svg { margin-top: 2px; }
.modes span { padding-left: 11.500px; }
.app-left .modes { padding-right: 6px; }
.app-right .modes { padding-right: 8px; }

.wall path { fill: none; stroke: #5a5a5a; stroke-width: 1; }
.wall .w2 { stroke: #555; stroke-width: 2; }
.gline { stroke: #5a5a5a; }
.foil { stroke: #a24ca2; fill: none; }
.tag { fill: none; stroke: #0a0; }
.hitbox { fill: none; stroke: #ff5500; stroke-width: 2; }
.rays { fill: none; stroke-width: 1; }
.blue circle, .orange circle, .white circle { fill: none; stroke-width: 2.100; }
.blue circle { stroke: #0a50ff; }
.orange circle { stroke: #ff5500; }
.white circle { stroke: #fff; }
.thin { fill: none; stroke-width: 1.200; }
.cyan { fill: none; stroke: #6ff; stroke-width: 1; }
.traj { fill: none; stroke: #ff5500; stroke-width: 1; }
.dash { stroke-dasharray: 3 3; }
.legend { font: 27px "Liberation Sans", Arial, sans-serif; fill: #fff; }
.legend.big { font-size: 31px; }
.legend .sup { font-size: 18px; }
.legend .greek { font-family: "Liberation Serif", serif; }
.note { font: 12px "Liberation Sans", Arial, sans-serif; fill: #fff; }

.splitter { width: 6px; padding-top: 389px; display: flex; flex-direction: column; align-items: center; }
.splitter b { font: bold 15px/18px "Liberation Sans", Arial, sans-serif; }
.splitter i { height: 82px; border-left: 1px dotted #444; margin-left: 3px; }
.panel { height: 898px; border-right: 1px solid #aaa; }
.app-left .panel { width: 515px; }
.app-right .panel { width: 373px; }
.notebook { width: calc(100% - 2px); height: 896px; border: 1px solid #aaa; border-right: 0; display: flex; flex-direction: column; }
.tabs { height: 21px; display: flex; padding-left: 8px; color: #555; white-space: nowrap; }
.tabs span { height: 16px; margin-top: 3px; line-height: 16px; padding-right: 5px; border-right: 1px solid #aaa; margin-right: 7px; }
.tabs span:first-child { border: 0; margin-right: 6px; }
.tabs .cur { margin-top: 2px; height: 18px; line-height: 14px; padding-right: 7px; margin-right: 6px; }
.tabs .dark { color: #000; }
.frame { flex: 1; margin-left: 2px; border-left: 1px solid #aaa; border-top: 1px solid #aaa; border-right: 1px solid #aaa; display: flex; flex-direction: column; position: relative; }

/* browser tree */
.tree { position: relative; flex: none; font-size: 11px; letter-spacing: -.24px; overflow: hidden; margin-right: 2px; }
.guides { position: absolute; left: 0; top: 0; }
.guides path { stroke: #aaa; fill: none; stroke-dasharray: 1 1; }
.node { position: relative; height: 18px; line-height: 19px; display: flex; align-items: flex-start; white-space: nowrap; }
.node.root { padding-left: 20px; }
.node.d0 { padding-left: 6px; }
.node.d1 { padding-left: 25px; }
.node.d2 { padding-left: 44px; }
.node.leaf { padding-left: 62px; }
.node.leaf svg { margin: 6px 6px 0 0; color: #f50; }
.node.leaf svg.mag { color: #f0f; }
.node.leaf svg.calo { margin: 4px 3.500px 0 -.5px; }
.node.sel::after { content: ""; position: absolute; left: 1px; right: 1px; top: 2px; height: 16px; border: 1px solid #aaa; }
.tg { width: 9px; height: 9px; margin: 6px 24px 0 0; flex: none; border: 1px solid #aaa; background: linear-gradient(#000, #000) center/5px 1px no-repeat, linear-gradient(#000, #000) center/1px 5px no-repeat, #fff; position: relative; }
.tg.open { background: linear-gradient(#000, #000) center/5px 1px no-repeat, #fff; }
.tg::after { content: ""; position: absolute; left: 9px; top: 3px; width: 5px; border-top: 1px dotted #aaa; }
.tg.none { border: 0; background: none; }
.tg.none::after { display: none; }
.ck span { margin-top: -2px; }
.box { margin: 4px 4.500px 0 .5px; }
.tg.ic { margin-right: 6px; }
.clu { margin: 2px 2px 0 0; color: #f50; }
.d2 .tg.ic { margin-right: 6px; }
.clu.b { color: #0a50ff; }
.arc { margin: 7px 6px 0 0; color: #f50; }

.tooltip { position: absolute; left: 77px; top: 713px; width: 214px; height: 94px; margin: 0; padding: 1px 0 0 3px; background: #000; color: #fff; border-top: 1px solid #aaa; border-left: 1px solid #aaa; font: 12px/13px "Liberation Sans", Arial, sans-serif; }
.hscroll { margin-top: auto; height: 18px; margin-bottom: 2px; display: flex; align-items: center; padding: 0 8px 0 5px; }
.thumb { margin-left: 7px; height: 16px; border: 1px solid #aaa; display: flex; align-items: center; justify-content: center; }
.app-left .thumb { width: 364px; }
.app-right .thumb { width: 183px; }
.thumb i { width: 7px; height: 8px; background: repeating-linear-gradient(90deg, #aaa 0 1px, #fff 1px 3px); }
.hscroll .end { margin-left: auto; }

.event-row { height: 31px; display: flex; color: #555; padding-left: 13px; }
.event-row label { width: 95px; padding-top: 7px; }
.num { width: 96px; height: 19px; margin-top: 7px; border-top: 1px solid #aaa; border-left: 1px solid #aaa; text-align: right; padding: 2px 5px 0 0; }
.slash { width: 35px; padding: 7px 0 0 18px; }
.steps { flex: 1; display: flex; gap: 2px; padding: 9px 4px 0 6px; }
.steps b { flex: 1; height: 15px; border-right: 1px solid #aaa; border-bottom: 1px solid #aaa; display: flex; align-items: center; justify-content: center; }

.taskbar { height: 26px; display: flex; align-items: stretch; }
.taskbar b { height: 25px; border-right: 1px solid #000; border-bottom: 1px solid #aaa; display: flex; align-items: center; justify-content: center; }
.t-logo { width: 53px; } .t-min { width: 25px; } .t-win { width: 25px; } .t-term { width: 28px; padding-left: 3px; } .t-globe { width: 27px; }
.t-min i { width: 10px; height: 2px; background: #000; margin-top: 14px; }
.ws { width: 28px; border-right: 1px solid #000; border-bottom: 1px solid #aaa; text-align: center; font: 17px/26px "DejaVu Sans Condensed", "DejaVu Sans", sans-serif; }
.ws.on { margin-left: 4px; font-weight: bold; border-top: 1px solid #000; border-left: 1px solid #000; border-right: 0; border-bottom: 0; }
.task { width: 290px; margin-left: 3px; display: flex; align-items: center; padding-left: 3px; border-right: 1px solid #000; border-bottom: 1px solid #aaa; }
.task.current { width: 288px; margin-left: 0; padding-left: 3px; border: 0; border-left: 2px solid #000; border-top: 2px solid #000; }
.cond { font: 17px "DejaVu Sans Condensed", "DejaVu Sans", sans-serif; }
.cond.bold { font-weight: bold; }
.tray { margin-left: auto; display: flex; align-items: center; gap: 4px; padding-right: 2px; }
.cpu { width: 20px; height: 20px; background: #000; border-bottom: 1px solid #0f0; }
.tray time { width: 84px; height: 20px; background: #000; color: #0f0; font: 16.500px/19px "DejaVu Sans Mono", monospace; text-align: center; }

/* GNOME shell */
.second { display: flex; flex-direction: column; }
.panel-top { height: 27px; background: linear-gradient(#59564d, #3d3c37); display: flex; align-items: center; padding-left: 12px; flex: none; }
.panel-top text { font: bold 14px "Open Sans", sans-serif; fill: #dfdbd2; }
.panel-top circle { fill: #dfdbd2; }
.panel-top .status text { font-weight: 600; }
.p-vnc { margin: 0 7px 0 19px; }
.caret { width: 0; height: 0; border: 5px solid transparent; border-top-color: #cfccc6; border-bottom: 0; }
.c1 { margin-left: 4px; }
.clock { margin-left: 734px; }
.status { margin-left: auto; display: flex; align-items: center; padding-right: 15px; }
.bt { margin-left: 30px; } .sl { margin-left: 31px; } .en { margin-left: 25px; } .c2 { margin-left: 4px; }
.net { margin-left: 32px; } .vol { margin-left: 12px; } .bat { margin-left: 13px; } .c3 { margin-left: 12px; }
.below { flex: 1; display: flex; }
.dock { width: 67px; background: linear-gradient(#53383d, #4c353d 45%, #45333a 75%, #3d3334); display: flex; flex-direction: column; }
.launch { position: relative; height: 62px; margin: 1px 3px 1px 2px; padding-left: 7px; display: flex; align-items: center; border-radius: 4px; }
.launch.focus { background: #6c565e; }
.launch > i { position: absolute; left: 0; width: 6px; height: 6px; border-radius: 50%; background: #ee5522; top: 28px; }
.r2 > i { top: 24px; box-shadow: 0 8px #ee5522; }
.r3 > i { top: 20px; box-shadow: 0 8px #ee5522, 0 17px #ee5522; }
.pv { font: bold 5px "Open Sans", sans-serif; fill: #fff; }
.apps { margin: auto 0 14px 15px; }
.remote { flex: 1; }
```
